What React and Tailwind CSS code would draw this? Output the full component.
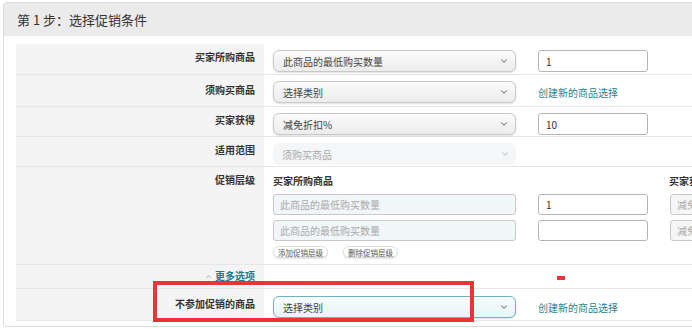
import { ChevronDown, ChevronUp } from 'lucide-react';

const font = { fontFamily: '"Noto Sans CJK SC", "Liberation Sans", sans-serif' };

// select box with chevron
function SelectBox({ text, variant = 'normal' }) {
  const styles = {
    normal:
      'border border-[#c8c8c8] bg-gradient-to-b from-[#fbfbfb] to-[#ececec] text-[#444] shadow-[0_1px_2px_rgba(0,0,0,0.12)]',
    disabled: 'bg-[#f4f6f7] text-[#a8a8a8]',
    focus:
      'border border-[#6fb3bf] bg-gradient-to-b from-[#f7fcfc] to-[#e8f4f6] text-[#444] shadow-[0_1px_2px_rgba(0,0,0,0.12)]',
  };
  return (
    <div
      className={`flex items-center justify-between w-[243px] h-[22px] rounded-[6px] pl-[9px] pr-[6px] text-[10px] ${styles[variant]}`}
    >
      <span>{text}</span>
      <ChevronDown
        size={10}
        strokeWidth={2.5}
        color={variant === 'disabled' ? '#c8c8c8' : '#777'}
      />
    </div>
  );
}

function TextBox({ value, w = 'w-[110px]' }) {
  return (
    <div
      className={`${w} h-[22px] border border-[#b4b4b4] rounded-[3px] bg-white flex items-center px-[7px] text-[10px] text-[#333]`}
    >
      {value}
    </div>
  );
}

function Row({ label, h, children, labelClass = '' }) {
  return (
    <div className={`flex border-b border-[#e6e6e6] ${h}`}>
      <div
        className={`w-[248px] shrink-0 bg-[#f4f4f4] text-right pr-[9px] pt-[5px] leading-[16px] text-[10px] font-bold text-[#333] ${labelClass}`}
      >
        {label}
      </div>
      <div className="flex-1 pl-[9px] pt-[6px]">{children}</div>
    </div>
  );
}

export default function App() {
  return (
    <div className="relative w-[692px] h-[329px] overflow-hidden bg-white" style={font}>
      {/* panel */}
      <div className="ml-[3px] mt-[2px] w-[760px] h-[325px] border border-[#dcdcdc] rounded-[3px]">
        <div className="h-[33px] bg-[#ebebeb] flex items-center pl-[13px] text-[13px] text-[#333]">
          第 1 步：选择促销条件
        </div>

        <div className="pt-[8px] pl-[12px]">
          <Row label="买家所购商品" h="h-[31px]">
            <div className="flex items-center gap-[22px]">
              <SelectBox text="此商品的最低购买数量" />
              <TextBox value="1" />
            </div>
          </Row>

          <Row label="须购买商品" h="h-[32px]" labelClass="pt-[7px]">
            <div className="flex items-center gap-[22px]">
              <SelectBox text="选择类别" />
              <span className="text-[10px] text-[#2b7f8e]">创建新的商品选择</span>
            </div>
          </Row>

          <Row label="买家获得" h="h-[30px]">
            <div className="flex items-center gap-[22px]">
              <SelectBox text="减免折扣%" />
              <TextBox value="10" />
            </div>
          </Row>

          <Row label="适用范围" h="h-[30px]">
            <SelectBox text="须购买商品" variant="disabled" />
          </Row>

          {/* promo levels */}
          <Row label="促销层级" h="h-[98px]">
            <div className="grid grid-cols-[243px_110px_60px] gap-x-[22px] gap-y-[5px] text-[10px]">
              <div className="font-bold text-[#333] leading-[16px] h-[16px]">买家所购商品</div>
              <div />
              <div className="font-bold text-[#333] leading-[16px] -ml-[1px]">买家获得</div>

              <div className="h-[21px] border border-[#c8c8c8] rounded-[3px] bg-[#f1f6f8] flex items-center px-[6px] text-[#aaa]">
                此商品的最低购买数量
              </div>
              <div className="h-[21px] border border-[#b4b4b4] rounded-[3px] bg-white flex items-center px-[7px] text-[#333]">
                1
              </div>
              <div className="h-[21px] border border-[#c8c8c8] rounded-[3px] bg-[#f6f6f6] flex items-center px-[6px] text-[#aaa]">
                减免折扣
              </div>

              <div className="h-[21px] border border-[#c8c8c8] rounded-[3px] bg-[#f1f6f8] flex items-center px-[6px] text-[#aaa]">
                此商品的最低购买数量
              </div>
              <div className="h-[21px] border border-[#b4b4b4] rounded-[3px] bg-white" />
              <div className="h-[21px] border border-[#c8c8c8] rounded-[3px] bg-[#f6f6f6] flex items-center px-[6px] text-[#aaa]">
                减免折扣
              </div>
            </div>
            <div className="flex gap-[15px] mt-[5px]">
              <span className="h-[12px] leading-[11px] px-[4px] rounded-full border border-[#ddd] bg-white text-[7.5px] text-[#555] shadow-[0_1px_1px_rgba(0,0,0,0.1)]">
                添加促销层级
              </span>
              <span className="h-[12px] leading-[11px] px-[4px] rounded-full border border-[#ddd] bg-white text-[7.5px] text-[#555] shadow-[0_1px_1px_rgba(0,0,0,0.1)]">
                删除促销层级
              </span>
            </div>
          </Row>

          {/* more options */}
          <div className="flex h-[24px] border-b border-[#e6e6e6]">
            <div className="w-[248px] shrink-0 bg-[#f4f4f4] flex justify-end items-start pr-[9px] pt-[3px] gap-[3px]">
              <ChevronUp size={7} strokeWidth={3} color="#999" className="mt-[5px]" />
              <span className="text-[10px] font-bold leading-[16px] text-[#237a8b]">更多选项</span>
            </div>
            <div className="flex-1 pt-[11px] pl-[293px]">
              <div className="w-[8px] h-[4px] bg-[#e8373d]" />
            </div>
          </div>

          <Row label="不参加促销的商品" h="h-[32px]" labelClass="pt-[7px]">
            <div className="flex items-center gap-[22px] pt-[1px]">
              <SelectBox text="选择类别" variant="focus" />
              <span className="text-[10px] text-[#2b7f8e]">创建新的商品选择</span>
            </div>
          </Row>
        </div>
      </div>

      {/* red highlight box */}
      <div className="absolute left-[153px] top-[281px] w-[321px] h-[41px] border-[4px] border-[#ec3338]" />
    </div>
  );
}
